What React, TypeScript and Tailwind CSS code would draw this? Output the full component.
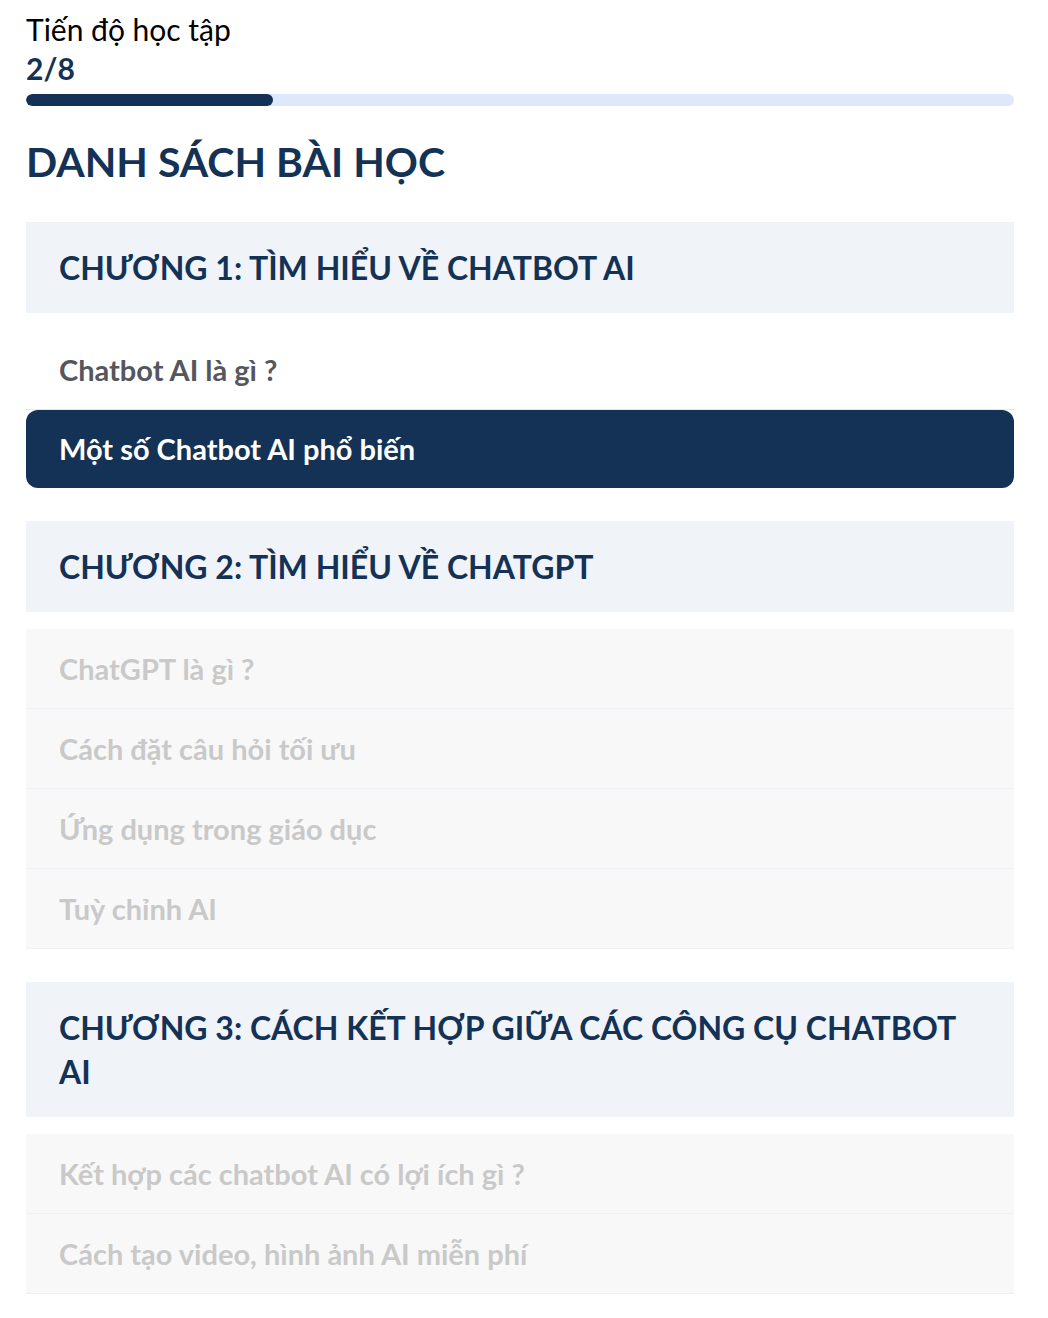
const lessons = [
  {
    title: 'CHƯƠNG 1: TÌM HIỂU VỀ CHATBOT AI',
    items: [
      { name: 'Chatbot AI là gì ?', state: 'done' },
      { name: 'Một số Chatbot AI phổ biến', state: 'active' },
    ],
  },
  {
    title: 'CHƯƠNG 2: TÌM HIỂU VỀ CHATGPT',
    items: [
      { name: 'ChatGPT là gì ?', state: 'locked' },
      { name: 'Cách đặt câu hỏi tối ưu', state: 'locked' },
      { name: 'Ứng dụng trong giáo dục', state: 'locked' },
      { name: 'Tuỳ chỉnh AI', state: 'locked' },
    ],
  },
  {
    title: 'CHƯƠNG 3: CÁCH KẾT HỢP GIỮA CÁC CÔNG CỤ CHATBOT AI',
    items: [
      { name: 'Kết hợp các chatbot AI có lợi ích gì ?', state: 'locked' },
      { name: 'Cách tạo video, hình ảnh AI miễn phí', state: 'locked' },
    ],
  },
];

function LessonRow({ name, state }: { name: string; state: string }) {
  if (state === 'active') {
    return (
      <div className="flex h-[78px] items-center rounded-[12px] bg-[#143255] px-[33px] text-[29px] font-bold text-white">
        {name}
      </div>
    );
  }
  return (
    <div
      className={
        state === 'done'
          ? 'flex h-[80px] items-center border-b border-[#e3e8ee] bg-white px-[33px] text-[29px] font-bold text-[#55565e]'
          : 'flex h-[80px] items-center border-b border-[#edf1f5] bg-[#f8f8f8] px-[33px] text-[29px] font-bold text-[#c9c9c9]'
      }
    >
      {name}
    </div>
  );
}

export default function App() {
  const done = 2;
  const total = 8;
  return (
    <div className="min-h-[1318px] bg-white pl-[26px] pr-[34px] pt-[10px] font-['Lato','Noto_Sans',sans-serif]">
      {/* Tiến độ */}
      <p className="text-[30px] leading-[38px] text-black">Tiến độ học tập</p>
      <p className="text-[30px] font-bold leading-[40px] text-[#143255]">
        {done}/{total}
      </p>
      <div className="mt-[6px] h-[12px] w-full overflow-hidden rounded-full bg-[#dde8fb]">
        <div
          className="h-full rounded-full bg-[#143255]"
          style={{ width: `${(done / total) * 100}%` }}
        />
      </div>

      <h2 className="mt-[32px] text-[41px] font-bold leading-[48px] text-[#143255]">DANH SÁCH BÀI HỌC</h2>

      <div className="mt-[36px] flex flex-col gap-[33px]">
        {lessons.map((ch) => (
          <div key={ch.title}>
            <div className="bg-[#f0f4f9] px-[33px] py-[23.5px] text-[32px] font-bold leading-[44px] text-[#143255]">
              {ch.title}
            </div>
            <div className="mt-[17px] flex flex-col">
              {ch.items.map((it) => (
                <LessonRow key={it.name} name={it.name} state={it.state} />
              ))}
            </div>
          </div>
        ))}
      </div>
    </div>
  );
}
